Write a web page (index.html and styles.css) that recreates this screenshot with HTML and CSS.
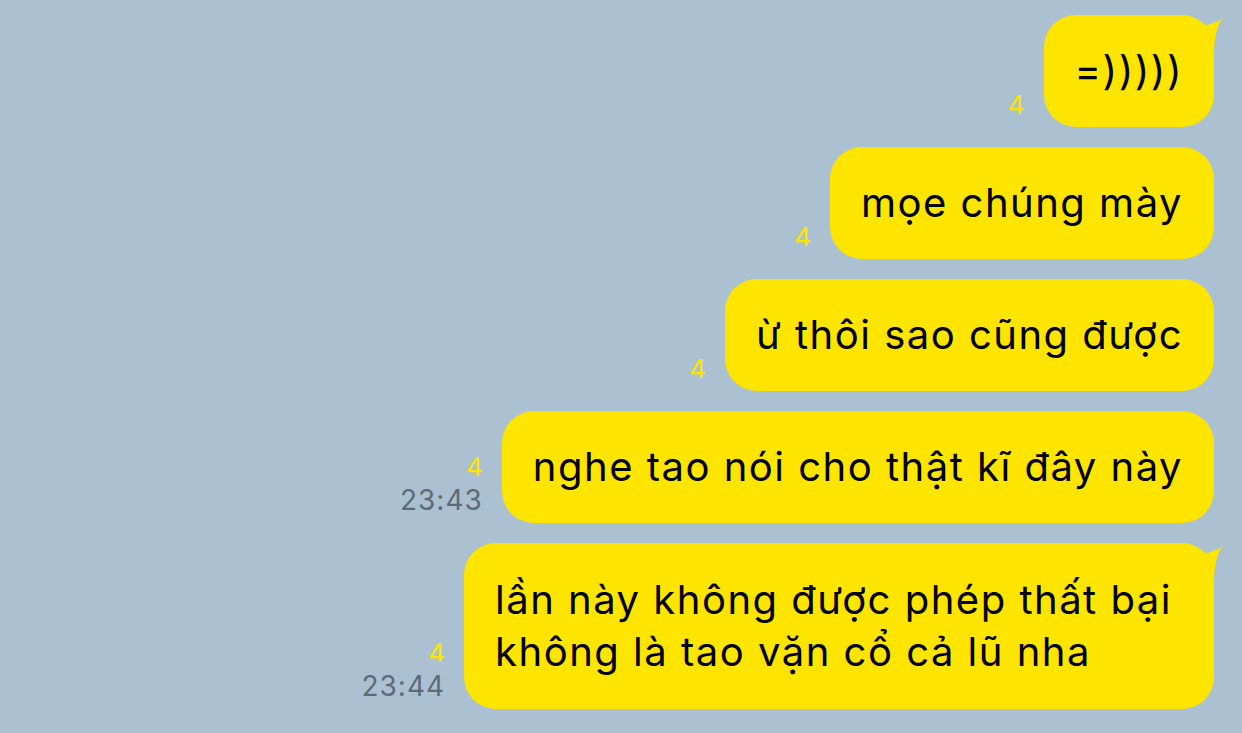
FILE: index.html
```html
<!DOCTYPE html>
<html lang="vi">
<head>
<meta charset="utf-8">
<link rel="stylesheet" href="styles.css">
</head>
<body>
<div class="chat">
  <div class="row">
    <div class="meta"><span class="unread">4</span></div>
    <div class="bubble">=)))))
      <svg class="tail-svg" width="24" height="36" viewBox="0 0 24 36"><path d="M2 11 Q14 9 23 3 Q15 12 14 36 L2 36 Z" fill="#fee500"/></svg>
    </div>
  </div>
  <div class="row">
    <div class="meta"><span class="unread">4</span></div>
    <div class="bubble">mọe chúng mày</div>
  </div>
  <div class="row">
    <div class="meta"><span class="unread">4</span></div>
    <div class="bubble">ừ thôi sao cũng được</div>
  </div>
  <div class="row">
    <div class="meta"><span class="unread">4</span><span class="time">23:43</span></div>
    <div class="bubble">nghe tao nói cho thật kĩ đây này</div>
  </div>
  <div class="row">
    <div class="meta"><span class="unread">4</span><span class="time">23:44</span></div>
    <div class="bubble multi">lần này không được phép thất bại<br>không là tao vặn cổ cả lũ nha
      <svg class="tail-svg" width="24" height="36" viewBox="0 0 24 36"><path d="M2 11 Q14 9 23 3 Q15 12 14 36 L2 36 Z" fill="#fee500"/></svg>
    </div>
  </div>
</div>
</body>
</html>
```

FILE: styles.css
```css
html, body {
  margin: 0;
  padding: 0;
  background: #abc1d1;
  width: 1242px;
  height: 733px;
  overflow: hidden;
}
.chat {
  display: flex;
  flex-direction: column;
  align-items: flex-end;
  gap: 20px;
  padding: 15px 28px 0 0;
  font-family: Inter, "Noto Sans", sans-serif;
}
.row {
  display: flex;
  align-items: flex-end;
  gap: 19px;
}
.meta {
  display: flex;
  flex-direction: column;
  align-items: flex-end;
  padding-bottom: 6px;
}
.unread {
  color: #fee500;
  font-size: 26px;
  line-height: 32px;
}
.time {
  color: #5e6a76;
  font-size: 28px;
  line-height: 34px;
  letter-spacing: 1px;
}
.bubble {
  position: relative;
  background: #fee500;
  color: #000;
  font-size: 40px;
  letter-spacing: 1.5px;
  line-height: 52px;
  padding: 30px 31px 30px 31px;
  border-radius: 32px;
  white-space: nowrap;
}
.bubble.multi {
  padding: 31px 42px 31px 31px;
}
.tail-svg {
  position: absolute;
  top: 0;
  right: -10px;
}
```
